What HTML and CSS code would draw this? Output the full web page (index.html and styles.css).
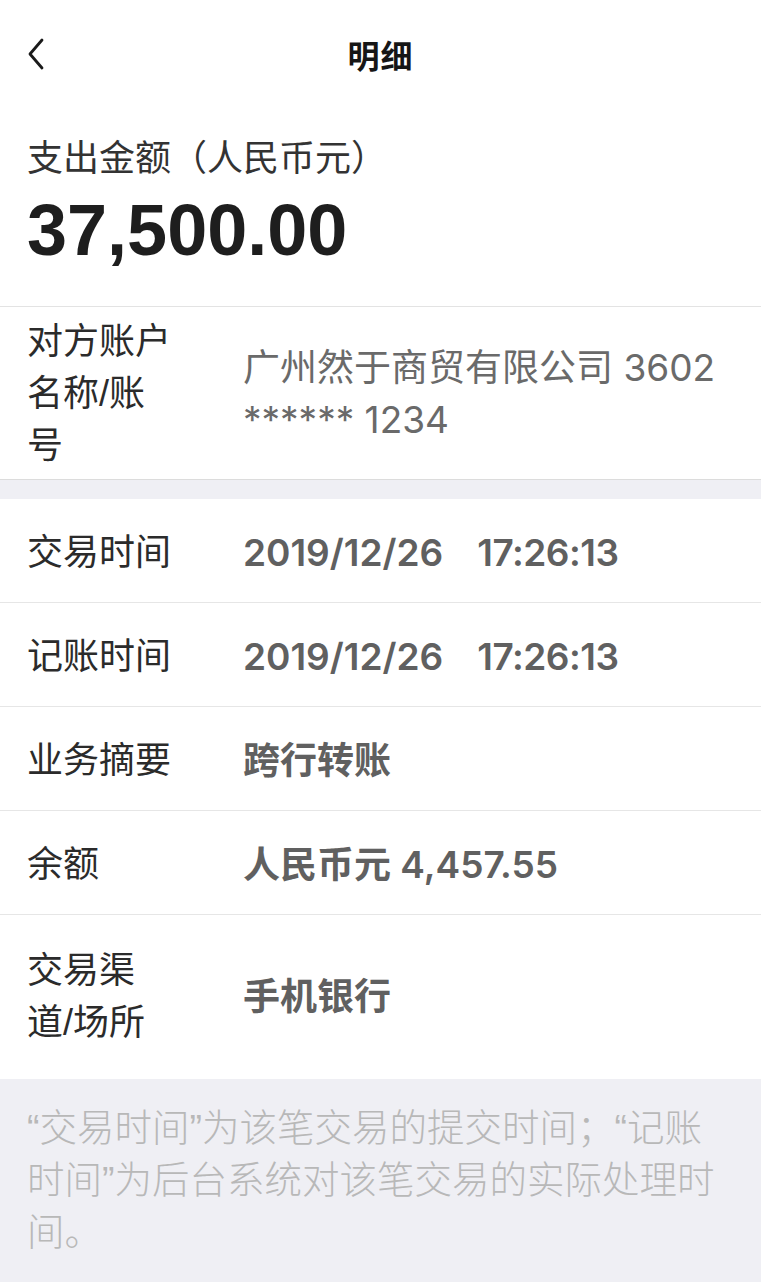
FILE: index.html
```html
<!DOCTYPE html>
<html lang="zh-CN">
<head>
    <meta charset="UTF-8">
    <meta name="viewport" content="width=device-width, initial-scale=1.0">
    <title>明细</title>
    <link rel="stylesheet" href="styles.css">
</head>
<body>
    <header class="nav">
        <a class="nav-back" href="#" aria-label="返回">
            <svg width="20" height="34" viewBox="0 0 20 34">
                <path d="M16 3 L4 17 L16 31" fill="none" stroke="#1a1a1a" stroke-width="2.8" stroke-linecap="round" stroke-linejoin="round"/>
            </svg>
        </a>
        <h1 class="nav-title">明细</h1>
    </header>

    <main>
        <section class="summary">
            <div class="summary-label">支出金额（人民币元）</div>
            <div class="summary-amount">37,500.00</div>
        </section>

        <section class="detail-group">
            <div class="detail-row tall">
                <div class="detail-label">对方账户名称/账号</div>
                <div class="detail-value light">广州然于商贸有限公司 3602 ****** 1234</div>
            </div>
        </section>

        <div class="group-gap"></div>

        <section class="detail-group">
            <div class="detail-row">
                <div class="detail-label">交易时间</div>
                <div class="detail-value">2019/12/26<span class="time">17:26:13</span></div>
            </div>
            <div class="detail-row">
                <div class="detail-label">记账时间</div>
                <div class="detail-value">2019/12/26<span class="time">17:26:13</span></div>
            </div>
            <div class="detail-row">
                <div class="detail-label">业务摘要</div>
                <div class="detail-value">跨行转账</div>
            </div>
            <div class="detail-row">
                <div class="detail-label">余额</div>
                <div class="detail-value">人民币元 4,457.55</div>
            </div>
            <div class="detail-row last">
                <div class="detail-label">交易渠道/场所</div>
                <div class="detail-value">手机银行</div>
            </div>
        </section>

        <footer class="note">
            <p>“交易时间”为该笔交易的提交时间；“记账时间”为后台系统对该笔交易的实际处理时间。</p>
        </footer>
    </main>
</body>
</html>
```

FILE: styles.css
```css
body {
    margin: 0;
    padding: 0;
    background-color: #efeff4;
    color: #2b2b2b;
    font-family: "Liberation Sans", "Noto Sans CJK SC", sans-serif;
    min-height: 1282px;
}

.nav {
    height: 108px;
    display: flex;
    align-items: center;
    justify-content: center;
    position: relative;
    background: white;
}

.nav-back {
    position: absolute;
    left: 26px;
    top: 37px;
    display: block;
    height: 34px;
}

.nav-title {
    margin: 0;
    font-size: 32px;
    font-weight: bold;
    color: #161616;
    letter-spacing: 1px;
}

.summary {
    background: white;
    padding: 25px 27px 36px;
    border-bottom: 1px solid #e3e3e3;
}

.summary-label {
    font-size: 36px;
    line-height: 52px;
    color: #333;
}

.summary-amount {
    margin-top: 5px;
    font-size: 72px;
    line-height: 80px;
    font-weight: bold;
    color: #1e1e1e;
}

.detail-group {
    background: white;
}

.detail-row {
    display: flex;
    align-items: center;
    min-height: 103px;
    padding: 0 27px;
    border-bottom: 1px solid #e6e6e6;
}

.detail-row.tall {
    padding-top: 5px;
    padding-bottom: 7px;
    border-bottom-color: #dcdcdc;
}

.detail-row.last {
    padding-top: 26px;
    padding-bottom: 30px;
    min-height: 0;
    border-bottom: none;
}

.detail-label {
    flex: 0 0 150px;
    width: 150px;
    margin-right: 66px;
    padding-top: 4px;
    font-size: 36px;
    line-height: 52px;
    color: #2b2b2b;
}

.detail-value {
    flex: 1;
    padding-top: 4px;
    font-family: Inter, "Noto Sans CJK SC", sans-serif;
    font-size: 37px;
    line-height: 52px;
    font-weight: 600;
    color: #606060;
}

.detail-value.light {
    font-weight: normal;
    color: #6a6a6a;
}

.detail-value .time {
    margin-left: 34px;
    letter-spacing: -0.5px;
}

.group-gap {
    height: 19px;
    background: #efeff4;
}

.note {
    background: #efeff4;
    padding: 23px 36px 40px 27px;
}

.note p {
    margin: 0;
    font-size: 37.5px;
    line-height: 52px;
    font-weight: 300;
    color: #b8b8b8;
}
```
